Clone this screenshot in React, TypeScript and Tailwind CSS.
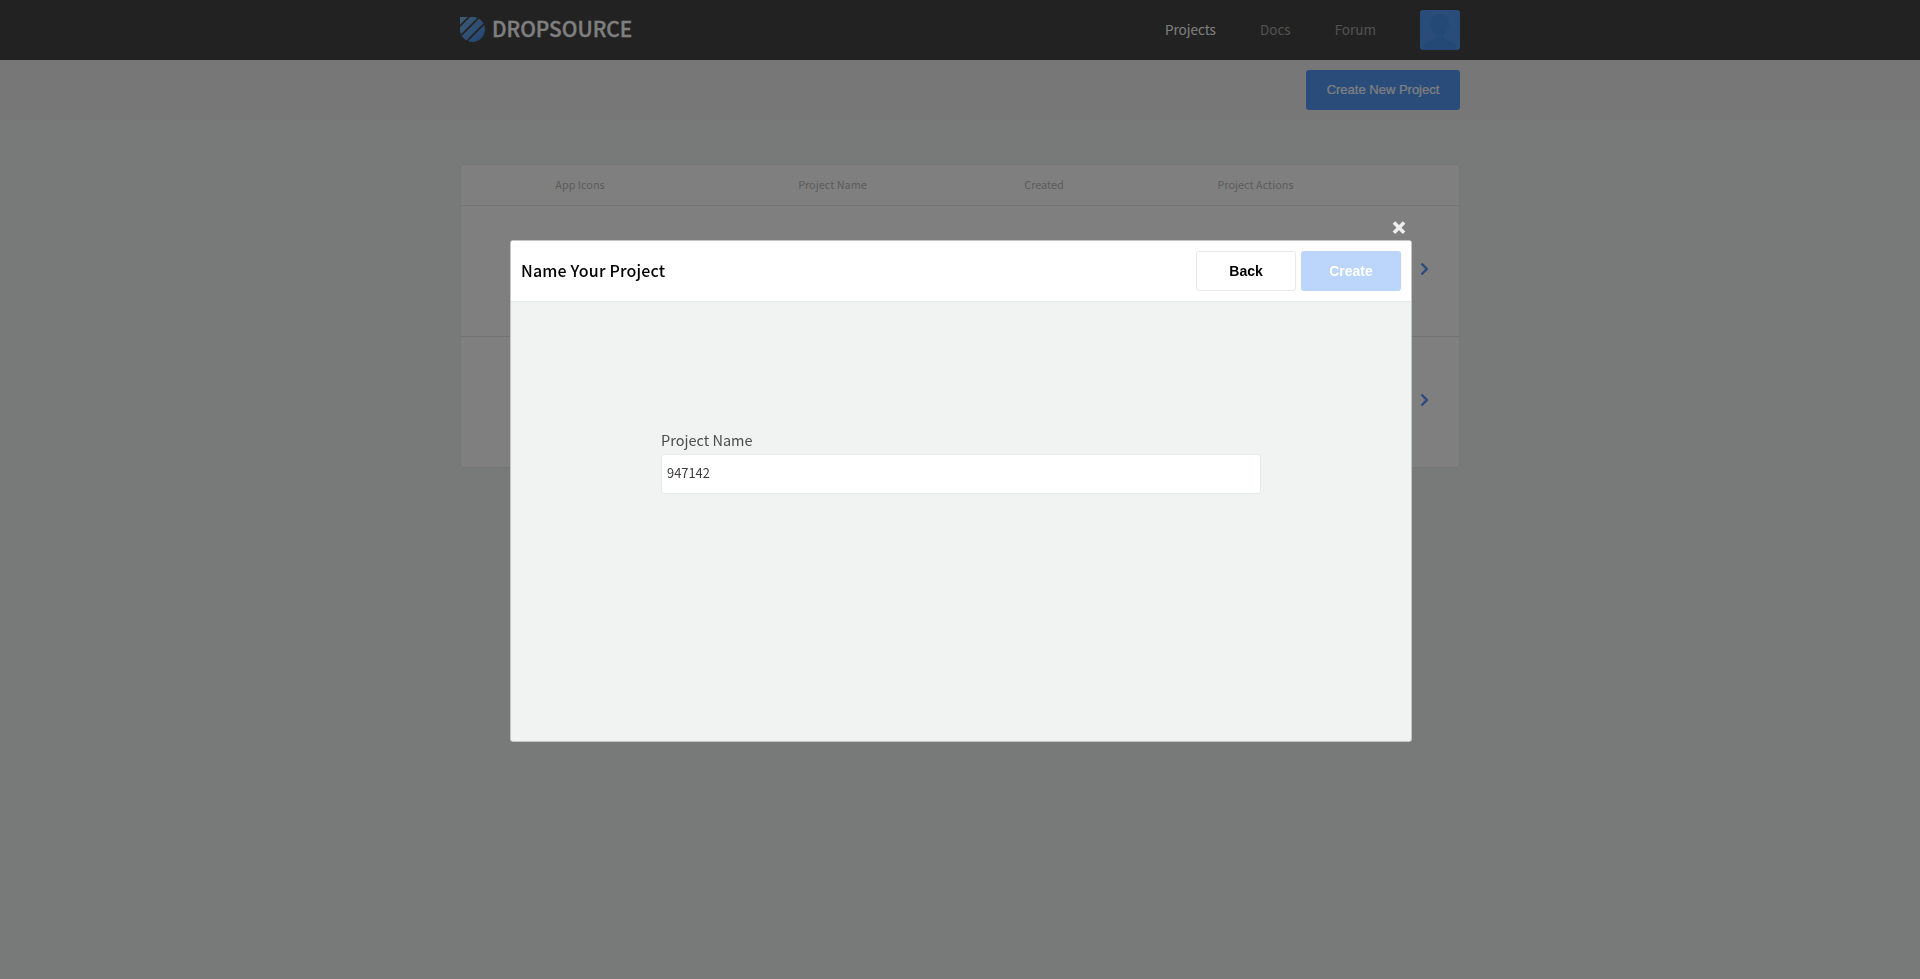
const SANS = "font-['Noto_Sans_CJK_SC',sans-serif]";
const ARIAL = "font-['Liberation_Sans',Arial,sans-serif]";

function Logo() {
  return (
    <div className="flex items-center gap-[6px]">
      <svg width="26" height="26" viewBox="0 0 26 26">
        <defs>
          <linearGradient id="drop" x1="0" y1="0" x2="1" y2="1">
            <stop offset="0" stopColor="#7fb4e6" />
            <stop offset="1" stopColor="#3c86e8" />
          </linearGradient>
          <clipPath id="dropClip">
            <path d="M0 0H13A12.5 12.5 0 1 1 0 12.5Z" />
          </clipPath>
        </defs>
        <g clipPath="url(#dropClip)">
          <rect width="26" height="26" fill="url(#drop)" />
          <path d="M-1 10L10 -1M-1 20.500L20.500 -1M4 27L27 4" stroke="#444" strokeWidth="1.700" />
        </g>
      </svg>
      <span className="pb-[4px] text-[20.8px] leading-[26px] font-medium text-white [-webkit-text-stroke:0.3px_white]">
        DROPSOURCE
      </span>
    </div>
  );
}

function Avatar() {
  return (
    <div className="h-10 w-10 overflow-hidden rounded-[3px] bg-[#5499f4]">
      <svg width="40" height="40" viewBox="0 0 40 40" fill="#4a92ee">
        <path d="M20 4c5 0 9 3 8.600 9 1 .4.700 4-.8 5-.6 3-2 5.500-4 7v3.500c3 2.500 9.500 3.500 12 6.500 1 1.300 1.500 3 1.500 5H2.500c0-2 .5-3.700 1.500-5 2.500-3 9-4 12-6.500V25c-2-1.500-3.400-4-4-7-1.500-1-1.800-4.600-.8-5C11 7 15 4 20 4z" />
      </svg>
    </div>
  );
}

function ProjectRow({ last }: { last?: boolean }) {
  return (
    <div
      className={
        last
          ? "flex h-[130px] items-center justify-end pr-[30px] pb-[4px]"
          : "flex h-[131px] items-center justify-end border-b border-[#e4e6e5] pr-[30px] pb-[4px]"
      }
    >
      <svg width="9" height="14" viewBox="0 0 9 14" fill="none">
        <path d="M1.500 1.500L6.800 7L1.500 12.500" stroke="#5499f4" strokeWidth="2.400" />
      </svg>
    </div>
  );
}

function Page() {
  return (
    <div className="flex h-full flex-col bg-[#f0f3f2]">
      <header className="h-[60px] bg-[#444444]">
        <div className="mx-auto flex h-full w-[1000px] items-center justify-between">
          <Logo />
          <nav className="flex items-center text-[13.5px] leading-[20px] text-[#a5a5a5]">
            <a className="mr-[44px] pb-[2px] text-white">Projects</a>
            <a className="mr-[44px] pb-[2px]">Docs</a>
            <a className="mr-[44px] pb-[2px]">Forum</a>
            <Avatar />
          </nav>
        </div>
      </header>
      <div className="h-[60px] bg-[#eeeeee]">
        <div className="mx-auto flex h-full w-[1000px] items-center justify-end">
          <button
            className={`${ARIAL} h-10 w-[154px] rounded-[3px] bg-[#5499f4] text-[13px] text-white [-webkit-text-stroke:0.2px_white]`}
          >
            Create New Project
          </button>
        </div>
      </div>
      <section className="mx-auto mt-[44px] w-[1000px] rounded-[3px] border border-[#e8eae9] bg-white">
        <div className="flex h-[41px] items-center border-b border-[#e4e6e5] pb-[2px] text-center text-[10.9px] leading-[16px] text-[#b8b8b8]">
          <span className="w-[238px]">App Icons</span>
          <span className="w-[267px]">Project Name</span>
          <span className="w-[156px]">Created</span>
          <span className="w-[267px]">Project Actions</span>
        </div>
        <ProjectRow />
        <ProjectRow last />
      </section>
    </div>
  );
}

function Modal() {
  return (
    <div className="fixed inset-0 flex flex-col items-center bg-black/50 pt-[221px] pl-[2px]">
      <div className="flex w-[902px] flex-col">
        <div className="flex h-[19px] justify-end pr-[6px]">
          <svg width="14" height="14" viewBox="0 0 14 14">
            <path
              d="M3.200 2.800L10.800 10.400M10.800 2.800L3.200 10.400"
              stroke="#eeeeee"
              strokeWidth="3.600"
              strokeLinecap="square"
              strokeLinejoin="round"
            />
          </svg>
        </div>
        <div className="flex h-[502px] flex-col overflow-hidden rounded-[3px] border border-[#c4c6c5] bg-[#f0f3f2]">
          <div className="flex h-[61px] shrink-0 items-center border-b border-[#e7e9e8] bg-white px-[10px]">
            <h1 className="flex-1 pb-[2px] text-[16px] leading-[24px] font-medium tracking-[0.18px] text-black">
              Name Your Project
            </h1>
            <div className={`${ARIAL} flex gap-[5px] text-[14px] font-bold`}>
              <button className="h-10 w-[100px] rounded-[3px] border border-[#e7e9e8] bg-white text-black">Back</button>
              <button className="h-10 w-[100px] rounded-[3px] bg-[#bbd5fb] text-white">Create</button>
            </div>
          </div>
          <div className="mx-auto mt-[126px] flex w-[600px] flex-col">
            <label className="pb-[2px] text-[14.5px] leading-[24px] text-[#4c4c4c]">Project Name</label>
            <input
              className="h-10 rounded-[3px] border border-[#e7e9e8] bg-white px-[5px] pb-[3px] text-[12.9px] text-[#3c3c3c] outline-none"
              defaultValue="947142"
            />
          </div>
        </div>
      </div>
    </div>
  );
}

export default function App() {
  return (
    <div className={`${SANS} h-screen w-full overflow-hidden`}>
      <Page />
      <Modal />
    </div>
  );
}
